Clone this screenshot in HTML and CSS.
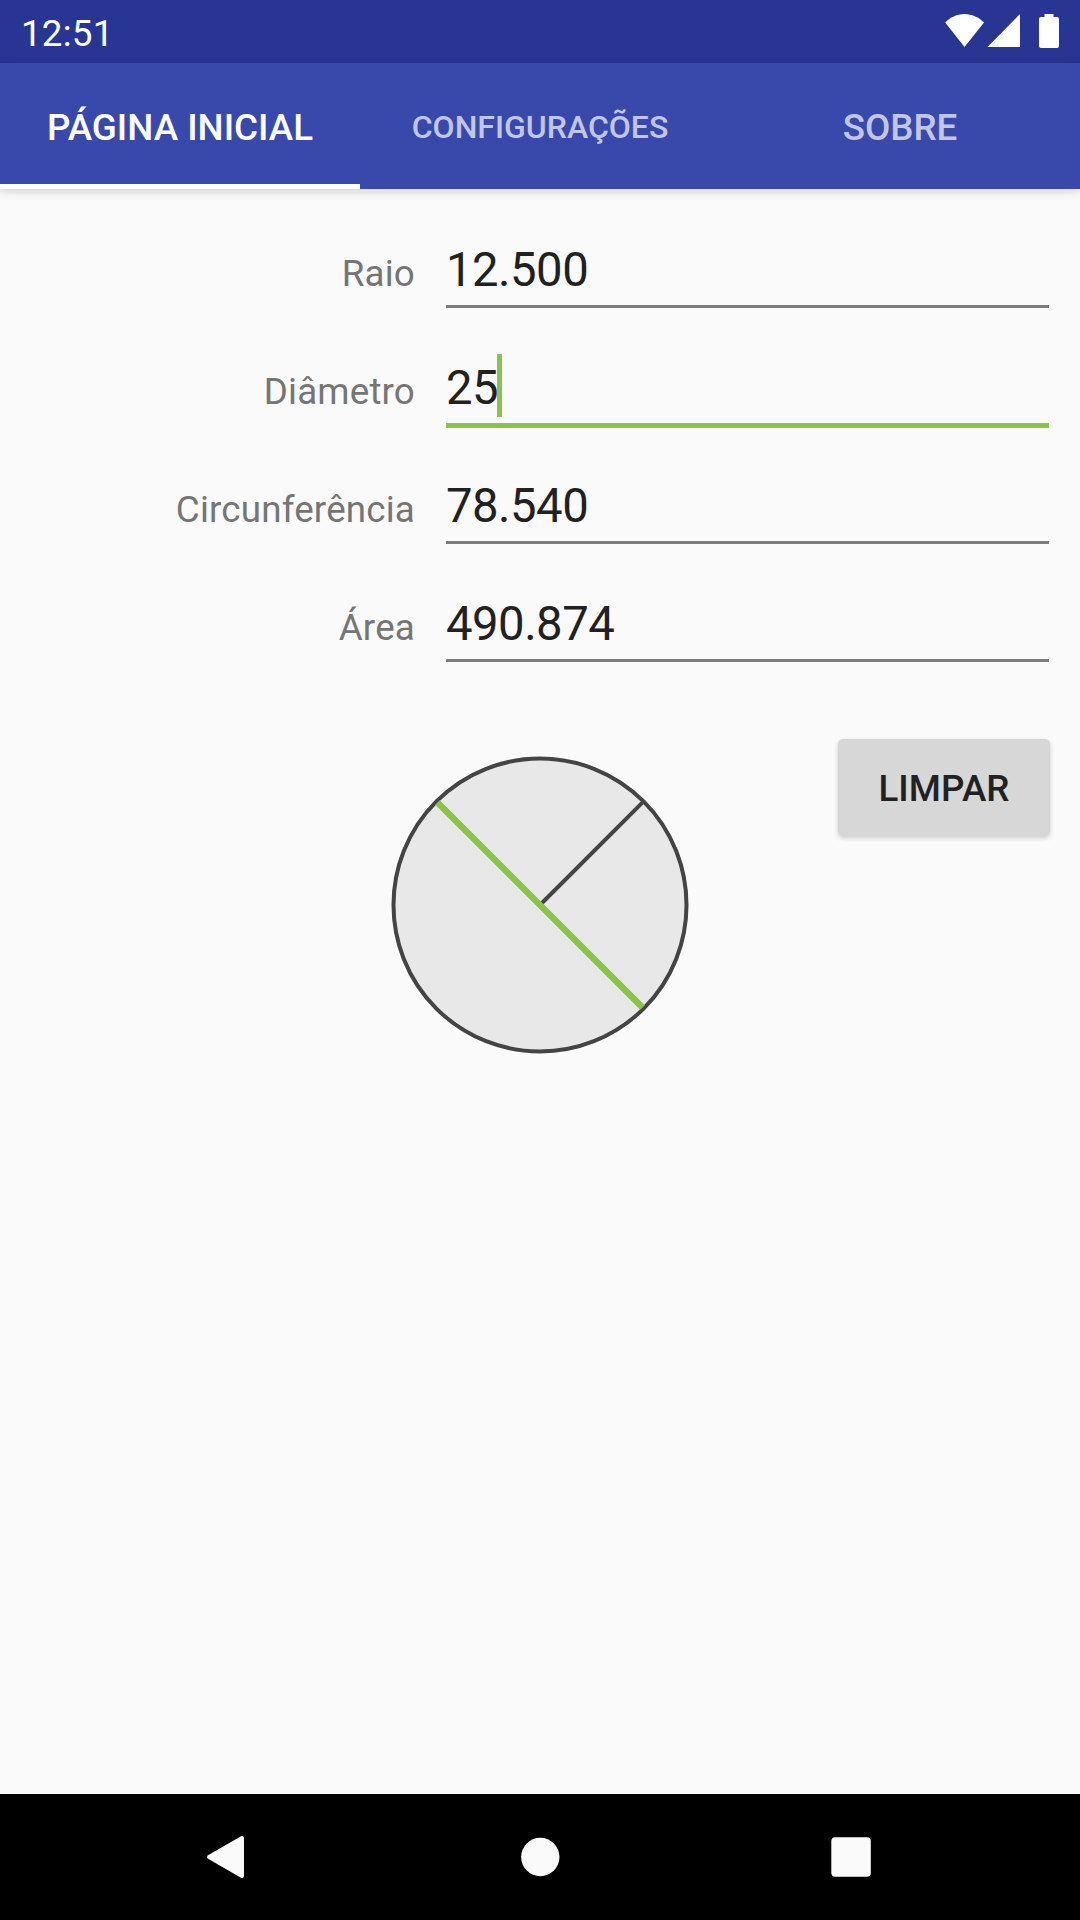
FILE: index.html
```html
<!DOCTYPE html>
<html lang="pt-BR">
<head>
<meta charset="utf-8">
<title>Círculo</title>
<link rel="stylesheet" href="styles.css">
</head>
<body>
<header class="status-bar">
  <span class="clock">12:51</span>
  <svg class="status-icons" width="120" height="40" viewBox="0 0 120 40" fill="#fff">
    <path d="M0.2 10.5C5 5.5 12 2 19.5 2S34 5.500 39 10.500L19.500 35Z"/>
    <path d="M75 2V35H42.500Z"/>
    <path d="M99.500 2h9v3h3.500a2 2 0 0 1 2 2v27a2 2 0 0 1-2 2H96a2 2 0 0 1-2-2V7a2 2 0 0 1 2-2h3.500Z"/>
  </svg>
</header>
<nav class="tabs">
  <a class="tab tab-active">PÁGINA INICIAL</a>
  <a class="tab tab-small">CONFIGURAÇÕES</a>
  <a class="tab">SOBRE</a>
</nav>
<main class="content">
  <section class="form">
    <div class="row"><label class="label">Raio</label><div class="field">12.500</div></div>
    <div class="row"><label class="label">Diâmetro</label><div class="field field-focus"><span class="value">25<i class="caret"></i></span></div></div>
    <div class="row"><label class="label">Circunferência</label><div class="field">78.540</div></div>
    <div class="row"><label class="label">Área</label><div class="field">490.874</div></div>
  </section>
  <section class="figure">
    <svg class="circle" width="300" height="300" viewBox="0 0 300 300">
      <circle cx="150" cy="150" r="146.500" fill="#e8e8e8" stroke="#444" stroke-width="4"/>
      <path d="M150 150L253.600 46.400" stroke="#444" stroke-width="4"/>
      <path d="M47.500 47.500L252.500 252.500" stroke="#8bc34a" stroke-width="6.500"/>
    </svg>
    <button class="clear">LIMPAR</button>
  </section>
</main>
<footer class="nav-bar">
  <svg width="44" height="44" viewBox="0 0 44 44"><path d="M5 22L38 3V41Z" fill="#fafafa" stroke="#fafafa" stroke-width="4" stroke-linejoin="round"/></svg>
  <svg width="44" height="44" viewBox="0 0 44 44"><circle cx="23.300" cy="22" r="19.200" fill="#fafafa"/></svg>
  <svg width="44" height="44" viewBox="0 0 44 44"><rect x="2.300" y="2.200" width="39.500" height="39.500" rx="4" fill="#fafafa"/></svg>
</footer>
</body>
</html>
```
FILE: styles.css
```css
* {
  box-sizing: border-box;
}

body {
  margin: 0;
  width: 1080px;
  height: 1920px;
  display: flex;
  flex-direction: column;
  overflow: hidden;
  background: #fafafa;
  font-family: Roboto, "Liberation Sans", sans-serif;
}

.status-bar {
  height: 63px;
  padding: 0 15px 0 21px;
  display: flex;
  align-items: center;
  justify-content: space-between;
  background: #283593;
  color: #fff;
}

.clock {
  font-size: 36.750px;
  line-height: 43px;
  padding-top: 4px;
  letter-spacing: 0.200px;
}

.tabs {
  height: 126px;
  display: grid;
  grid-template-columns: repeat(3, 1fr);
  background: #3949ab;
  box-shadow: 0 2px 10px rgba(0, 0, 0, 0.180);
}

.tab {
  display: flex;
  align-items: center;
  justify-content: center;
  padding-top: 7px;
  border-bottom: 5px solid transparent;
  font-size: 36.750px;
  font-weight: 500;
  color: rgba(255, 255, 255, 0.700);
}

.tab-small {
  font-size: 32px;
}

.tab-active {
  color: #fff;
  border-bottom-color: #fff;
}

.content {
  flex: 1;
}

.form {
  padding: 53px 31px 0 0;
}

.row {
  height: 118px;
  display: grid;
  grid-template-columns: 415px 1fr;
  column-gap: 31px;
  align-items: baseline;
}

.label {
  text-align: right;
  font-size: 36.750px;
  letter-spacing: 0.180px;
  color: #757575;
}

.field {
  height: 66px;
  border-bottom: 3px solid #7c7c7c;
  font-size: 47.250px;
  line-height: 56px;
  letter-spacing: -0.500px;
  color: #212121;
}

.field-focus {
  height: 68px;
  border-bottom: 5px solid #8bc34a;
}

.value {
  position: relative;
}

.caret {
  position: absolute;
  left: 51px;
  top: -6px;
  width: 5px;
  height: 63px;
  background: #8bc34a;
}

.figure {
  display: grid;
  grid-template-columns: 1fr 300px 1fr;
  padding: 25px 30px 0;
}

.circle {
  grid-column: 2;
  margin-top: 16px;
}

.clear {
  justify-self: end;
  width: 212px;
  height: 97px;
  padding: 2px 0 0;
  border: 0;
  border-radius: 5px;
  background: #d7d7d7;
  box-shadow: 0 2px 5px rgba(0, 0, 0, 0.180);
  font: 500 36.750px Roboto, "Liberation Sans", sans-serif;
  letter-spacing: 0.100px;
  color: #212121;
}

.nav-bar {
  height: 126px;
  display: flex;
  align-items: center;
  justify-content: space-between;
  padding: 0 207px 0 204px;
  background: #000;
}
```
